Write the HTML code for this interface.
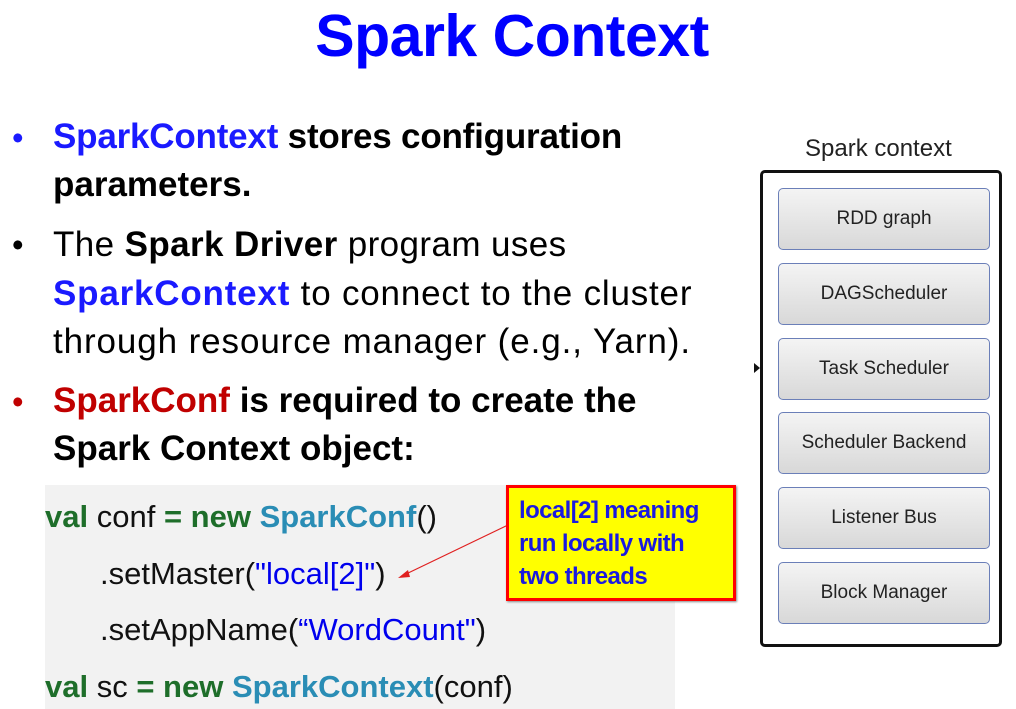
<!DOCTYPE html>
<html><head><style>
body{margin:0;width:1016px;height:709px;background:#fff;position:relative;overflow:hidden;font-family:"Liberation Sans",sans-serif}
.t{position:absolute;white-space:nowrap}
.title{left:0;width:1024px;text-align:center;top:2px;font-size:59px;font-weight:bold;color:#0000ff;letter-spacing:-0.5px}
.l{font-size:35px;color:#000;left:53px;letter-spacing:0px}
.b{font-weight:bold}
.blue{color:#1a1aff}
.red{color:#c00000}
.dot{left:12px;font-size:33px}
.code{position:absolute;left:45px;top:485px;width:630px;height:224px;background:#f2f2f2}
.c{font-size:31px;color:#111;letter-spacing:0px}
.g{color:#1e6e2a;font-weight:bold}
.cy{color:#2a8db5;font-weight:bold}
.bl{color:#0000ee}
.call{position:absolute;left:506px;top:485px;width:224px;height:110px;background:#ffff00;border:3px solid #ff0000;box-shadow:1px 1px 2px #888}
.call div{color:#1a1ae0;font-weight:bold;font-size:24px;line-height:33px;padding:6px 0 0 10px;letter-spacing:-0.6px}
.outer{position:absolute;left:760px;top:170px;width:236px;height:471px;border:3px solid #111;border-radius:5px;background:#fff}
.box{position:absolute;left:778px;width:210px;height:60px;border:1.5px solid #6b7fb8;border-radius:5px;background:linear-gradient(#f4f4f4,#d8d8d8);font-size:19px;color:#222;text-align:center;line-height:60px}
</style></head><body>
<div class="t title">Spark Context</div>
<div class="t dot" style="top:119px;color:#1a1aff">•</div>
<div class="t l b" style="top:117px;letter-spacing:-0.2px"><span class="blue">SparkContext</span> stores configuration</div>
<div class="t l b" style="top:165px">parameters.</div>
<div class="t dot" style="top:226px">•</div>
<div class="t l" style="top:225px;letter-spacing:0.4px">The <b>Spark Driver</b> program uses</div>
<div class="t l" style="top:274px;letter-spacing:0.8px"><b class="blue">SparkContext</b> to connect to the cluster</div>
<div class="t l" style="top:322px;letter-spacing:0.9px">through resource manager (e.g., Yarn).</div>
<div class="t dot" style="top:383px;color:#c00000">•</div>
<div class="t l b" style="top:381px;letter-spacing:0px"><span class="red">SparkConf</span> is required to create the</div>
<div class="t l b" style="top:429px;letter-spacing:0px">Spark Context object:</div>
<div class="code"></div>
<div class="t c" style="left:45px;top:499px"><span class="g">val</span> conf <span class="g">= new</span> <span class="cy">SparkConf</span>()</div>
<div class="t c" style="left:100px;top:556px">.setMaster(<span class="bl">"local[2]"</span>)</div>
<div class="t c" style="left:100px;top:612px">.setAppName(<span class="bl">“WordCount"</span>)</div>
<div class="t c" style="left:45px;top:669px"><span class="g">val</span> sc <span class="g">= new</span> <span class="cy">SparkContext</span>(conf)</div>
<svg style="position:absolute;left:0;top:0" width="1016" height="709"><line x1="508" y1="525" x2="404" y2="575" stroke="#e02020" stroke-width="1.2"/><polygon points="398,578 408,570 410,577" fill="#e02020"/></svg>
<div class="call"><div>local[2] meaning<br>run locally with<br>two threads</div></div>
<div class="t" style="left:805px;top:135px;font-size:24px;color:#222">Spark context</div>
<div class="outer"></div>
<div class="t" style="left:754px;top:363px;width:0;height:0;border-top:5px solid transparent;border-bottom:5px solid transparent;border-left:6px solid #111"></div>
<div class="box" style="top:188px">RDD graph</div>
<div class="box" style="top:263px">DAGScheduler</div>
<div class="box" style="top:338px">Task Scheduler</div>
<div class="box" style="top:412px">Scheduler Backend</div>
<div class="box" style="top:487px">Listener Bus</div>
<div class="box" style="top:562px">Block Manager</div>
</body></html>
